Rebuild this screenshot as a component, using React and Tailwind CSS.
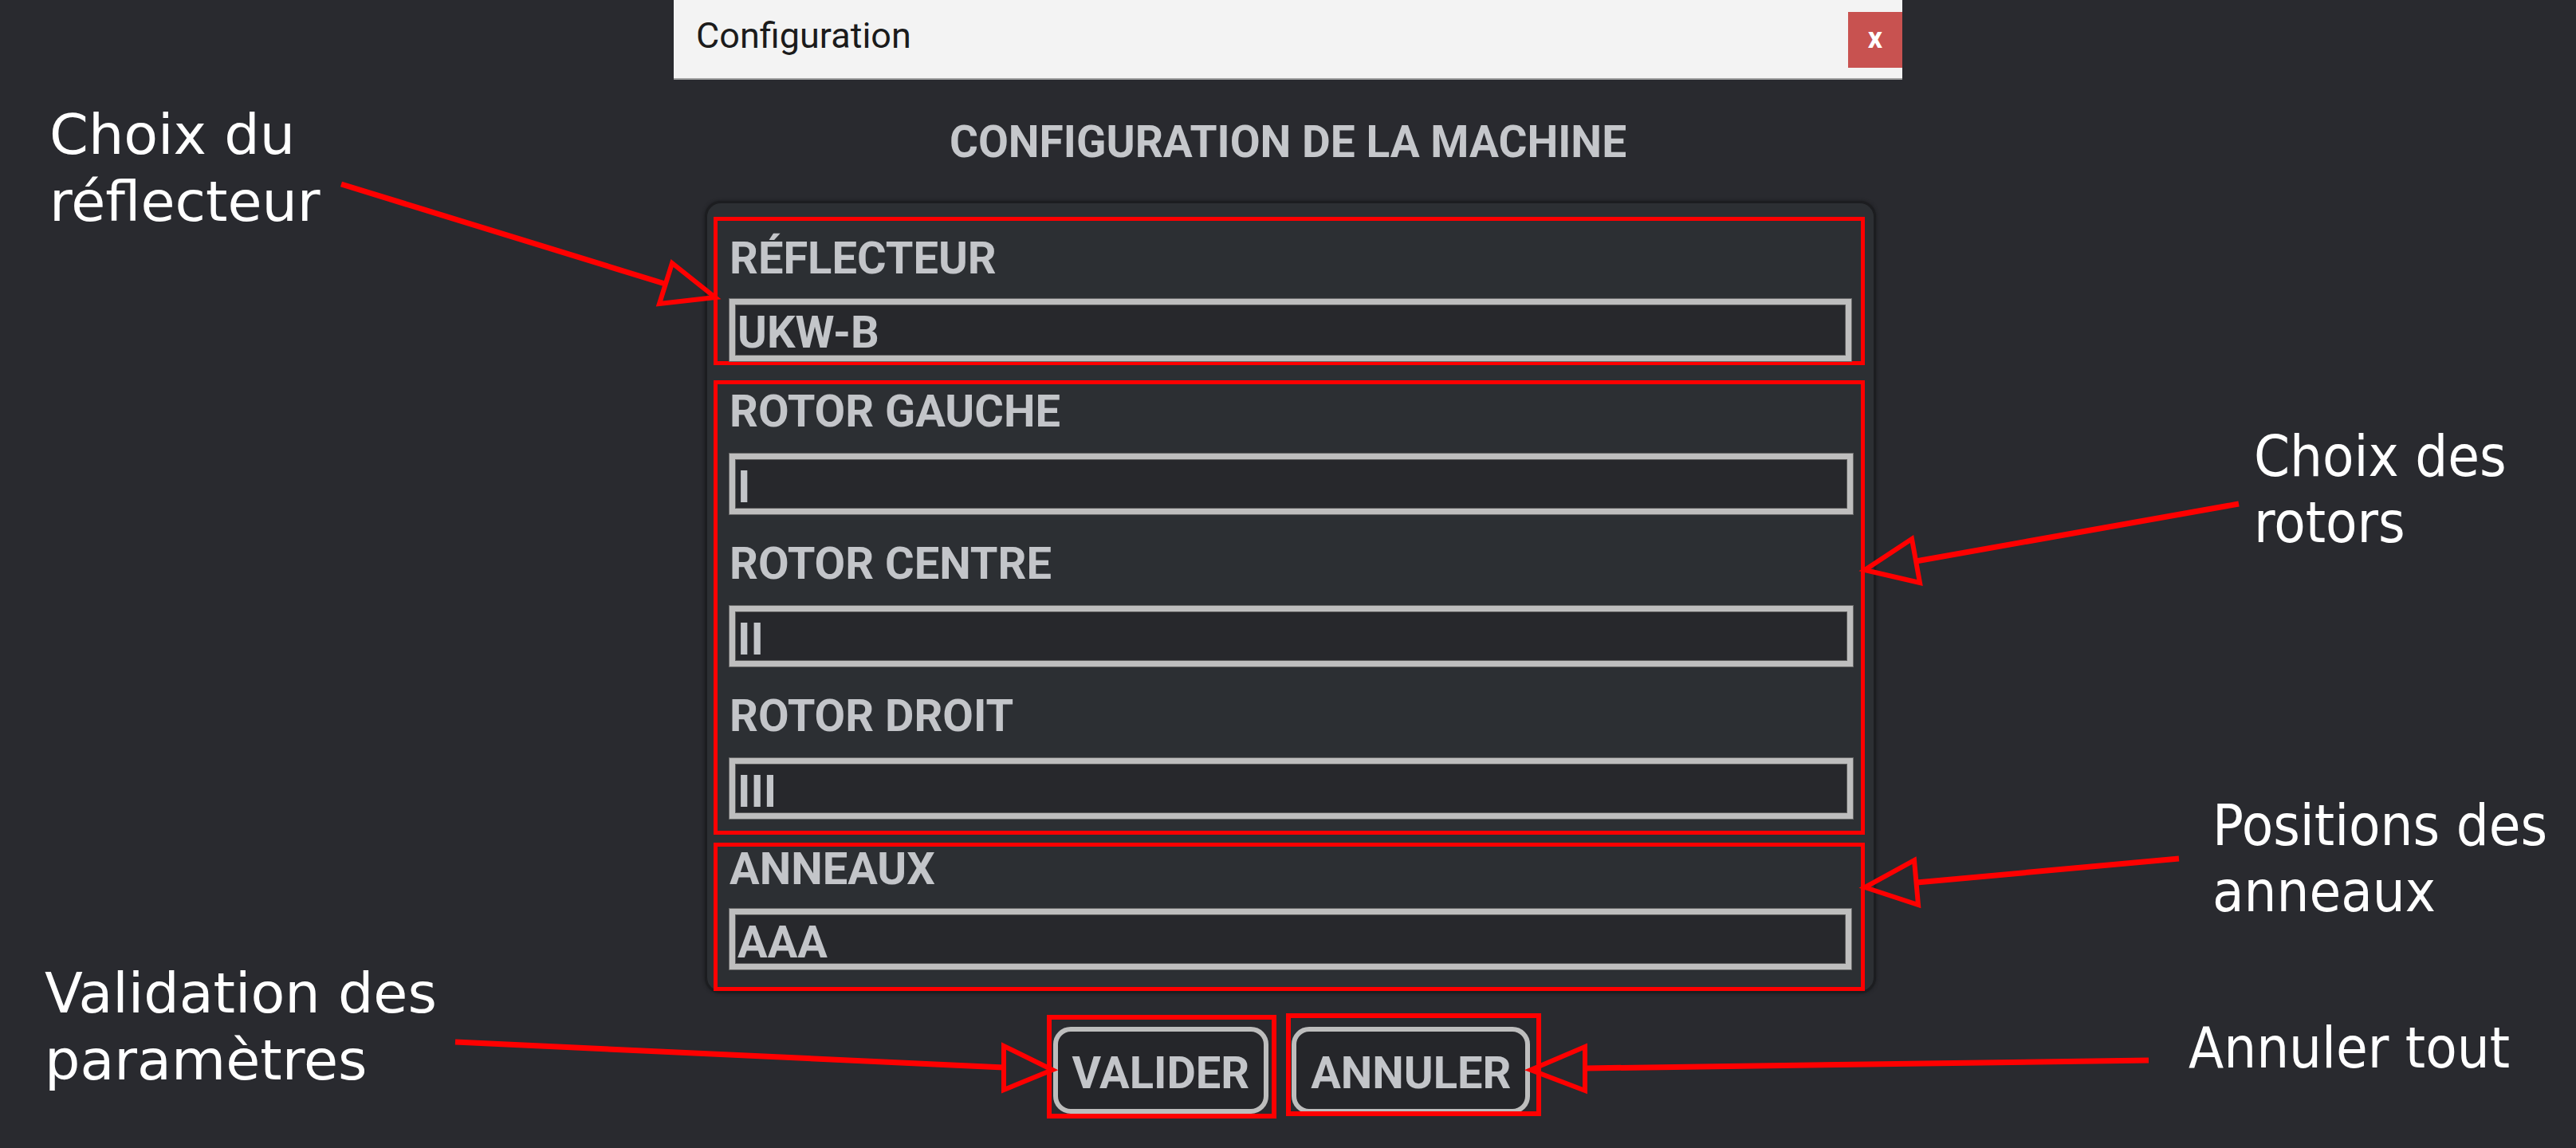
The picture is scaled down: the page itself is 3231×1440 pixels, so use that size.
const valueText = 'text-[56px] font-bold leading-none text-[#c3c5c9]'

function Field({ label, value, gap, className = '' }) {
  return (
    <div className={className}>
      <div className="text-[56px] font-bold leading-none text-[#c3c5c9]">{label}</div>
      <div
        className={`${gap} h-[76px] border-[7px] border-[#bebebe] bg-[#27282c] pl-[3px] pt-[7px] outline outline-1 outline-[#6a6a6a] shadow-[inset_0_0_0_1px_#5c5c5c] ${valueText}`}
      >
        {value}
      </div>
    </div>
  )
}

function Button({ children, box }) {
  return (
    <div className="relative">
      <div className="flex h-[109px] items-center rounded-[22px] border-[6px] border-[#bdbdbd] bg-[#25262a] px-[18px] pt-[6px] text-[56px] font-bold leading-none text-[#c3c5c9]">
        {children}
      </div>
      <div className={`pointer-events-none absolute border-[6px] border-[#ff0000] ${box}`} />
    </div>
  )
}

export default function App() {
  return (
    <div className="relative flex h-[1440px] w-[3231px] overflow-hidden bg-[#292a2f] font-['Roboto','Liberation_Sans',sans-serif]">
      {/* left notes */}
      <div className="w-[845px] shrink-0 pl-[62px] font-['DejaVu_Sans',sans-serif] text-[70px] leading-[84px] text-white">
        <div className="mt-[127px] whitespace-nowrap">
          Choix du
          <br />
          réflecteur
        </div>
        <div className="-ml-[6px] mt-[909px] whitespace-nowrap">
          Validation des
          <br />
          paramètres
        </div>
      </div>

      {/* dialog */}
      <div className="flex w-[1541px] shrink-0 flex-col">
        <div className="flex h-[100px] items-start justify-between border-b-2 border-[#a2a2a2] bg-[#f3f3f3]">
          <span className="pl-[28px] pt-[22px] text-[45px] leading-none text-[#1b1b1b]">Configuration</span>
          <div className="mt-[15px] flex h-[70px] w-[68px] items-center justify-center bg-[#c85250] pb-[4px] text-[36px] font-bold leading-none text-white">
            x
          </div>
        </div>

        <h1 className="mt-[51px] text-center text-[55px] font-bold leading-none text-[#c5c7cb]">
          CONFIGURATION DE LA MACHINE
        </h1>

        <div className="ml-[39px] mr-[33px] mt-[46px] rounded-[20px] border-[3px] border-[#1c1d20] bg-[#2c2f33] pl-[8px] pr-[11px] pt-[17px] shadow-[0_0_4px_#1a1b1e]">
          <div className="border-[5px] border-[#ff0000] pl-[15px] pr-[12px] pt-[19px]">
            <Field label="RÉFLECTEUR" value="UKW-B" gap="mt-[23px] h-[78px]" />
          </div>

          <div className="mt-[19px] border-[5px] border-[#ff0000] pb-[15px] pl-[15px] pr-[10px] pt-[6px]">
            <Field label="ROTOR GAUCHE" value="I" gap="mt-[25px]" />
            <Field label="ROTOR CENTRE" value="II" gap="mt-[25px]" className="mt-[34px]" />
            <Field label="ROTOR DROIT" value="III" gap="mt-[25px]" className="mt-[34px]" />
          </div>

          <div className="mt-[10px] border-[5px] border-[#ff0000] pb-[22px] pl-[15px] pr-[12px]">
            <Field label="ANNEAUX" value="AAA" gap="mt-[22px]" />
          </div>
        </div>

        <div className="mt-[42px] flex justify-center gap-[29px] pl-[9px]">
          <Button box="-bottom-[6px] -left-[8px] -right-[10px] -top-[15px]">VALIDER</Button>
          <Button box="-bottom-[3px] -left-[7px] -right-[14px] -top-[17px]">ANNULER</Button>
        </div>
      </div>

      {/* right notes */}
      <div className="flex-1 font-['DejaVu_Sans',sans-serif] text-[71px] leading-[83px] text-white">
        <div className="ml-[441px] mt-[531px] origin-left scale-x-[0.91] whitespace-nowrap">
          Choix des
          <br />
          rotors
        </div>
        <div className="ml-[389px] mt-[297px] origin-left scale-x-[0.91] whitespace-nowrap">
          Positions des
          <br />
          anneaux
        </div>
        <div className="ml-[359px] mt-[113px] origin-left scale-x-[0.91] whitespace-nowrap">Annuler tout</div>
      </div>

      {/* arrows */}
      <svg
        className="pointer-events-none absolute inset-0"
        width="3231"
        height="1440"
        viewBox="0 0 3231 1440"
        fill="none"
        stroke="#ff0000"
      >
        <line x1="428" y1="231" x2="834" y2="356" strokeWidth="7" />
        <polygon points="897,373 843,330 827,381" strokeWidth="6" />

        <line x1="2808" y1="632" x2="2403" y2="704" strokeWidth="7" />
        <polygon points="2339,715 2408,731 2398,676" strokeWidth="6" />

        <line x1="2733" y1="1077" x2="2404" y2="1107" strokeWidth="7" />
        <polygon points="2339,1113 2406,1135 2401,1079" strokeWidth="6" />

        <line x1="571" y1="1307" x2="1259" y2="1339" strokeWidth="7" />
        <polygon points="1320,1342 1259,1312 1259,1367" strokeWidth="6" />

        <line x1="2695" y1="1330" x2="1988" y2="1340" strokeWidth="7" />
        <polygon points="1920,1342 1988,1313 1988,1368" strokeWidth="6" />
      </svg>
    </div>
  )
}
